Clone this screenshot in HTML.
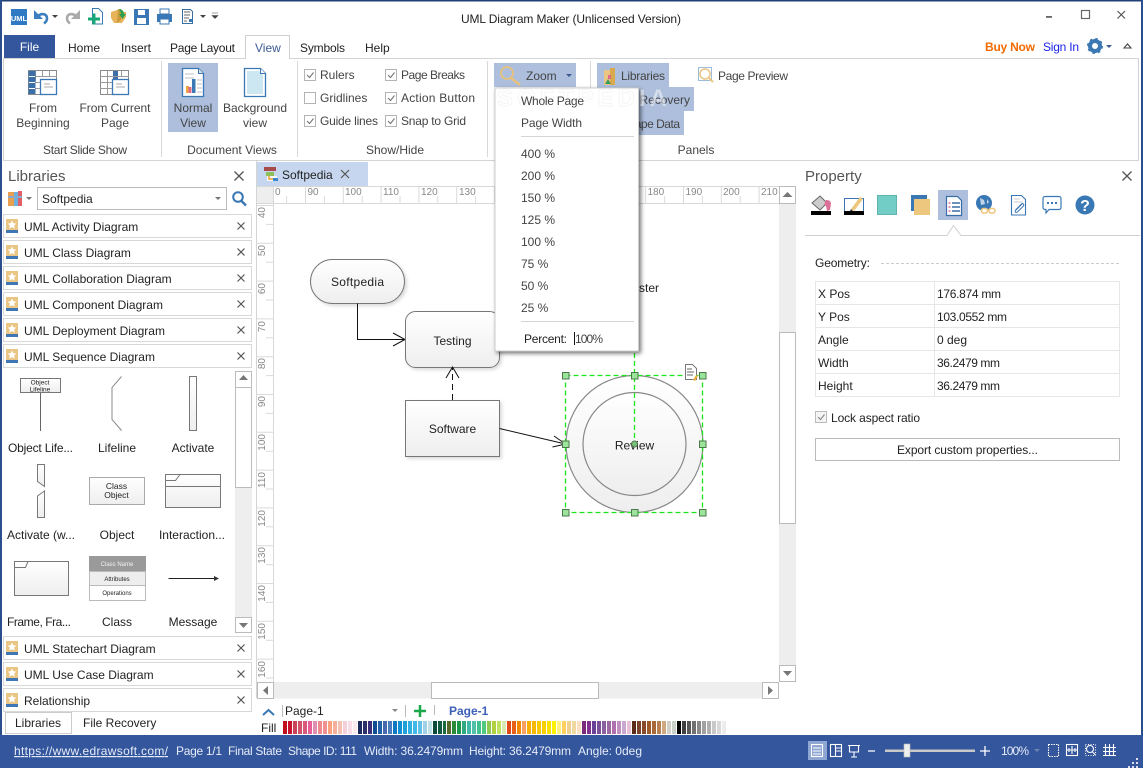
<!DOCTYPE html>
<html>
<head>
<meta charset="utf-8">
<title>UML Diagram Maker</title>
<style>
html,body{margin:0;padding:0;background:#fff;width:1143px;height:768px;overflow:hidden}
#s{position:absolute;left:0;top:0}
text{font-family:"Liberation Sans",sans-serif;font-size:12px;fill:#222}
.r text,text.r{fill:#444}
.c{text-anchor:middle}
.rl text{font-size:10px;fill:#888}
.st text{fill:#e6ecf8}
#pal{position:absolute;left:283px;top:721px;width:444px;height:13px;display:flex}
#pal i{flex:1;margin-right:1px;display:block}
</style>
</head>
<body>
<svg id="s" width="1143" height="768" viewBox="0 0 1143 768" xmlns="http://www.w3.org/2000/svg">
<defs>
<linearGradient id="g" x1="0" y1="0" x2="0" y2="1"><stop offset="0" stop-color="#fff"/><stop offset="1" stop-color="#eeeeee"/></linearGradient>
<g id="lib"><rect x="6" y="5" width="12" height="11" fill="#eac684"/><rect x="6" y="16" width="12" height="3" fill="#3f76b4"/><path d="M12 6.500l1.300 2.800 3 .3-2.200 2 .6 3-2.700-1.500-2.700 1.500.6-3-2.200-2 3-.3z" fill="#fff"/><path d="M237.500 8.500l7 7M244.500 8.500l-7 7" stroke="#555" stroke-width="1.200" fill="none"/></g>
<g id="h"><rect x="-3" y="-3" width="6.500" height="6.500" fill="#9ce49c" stroke="#4a7a4a" stroke-width="1"/></g>
<filter id="sh" x="-10%" y="-10%" width="125%" height="125%"><feDropShadow dx="2" dy="2" stdDeviation="1.500" flood-color="#000" flood-opacity=".14"/></filter>
<filter id="ms" x="-10%" y="-10%" width="120%" height="120%"><feDropShadow dx="2" dy="2" stdDeviation="2" flood-color="#000" flood-opacity=".55"/></filter>
<clipPath id="cv"><rect x="273" y="203" width="506" height="479"/></clipPath>
</defs>

<!-- window frame -->
<rect width="1143" height="768" fill="#fff"/>
<rect x="0" y="0" width="1143" height="1.500" fill="#1f3f75"/>
<rect x="0" y="0" width="2" height="768" fill="#2b4e8c"/>
<rect x="1141" y="0" width="2" height="768" fill="#2b4e8c"/>

<!-- QAT -->
<rect x="11" y="9" width="16" height="16" fill="#2f78c4"/>
<text x="19" y="21" class="c" style="font-size:7.500px;font-weight:bold;fill:#fff">UML</text>
<path d="M34 10v9h9z" fill="#3c7fc0"/>
<path d="M38 16c4-3.500 9-2 9 2.500 0 2-1 3.500-3 5" fill="none" stroke="#3c7fc0" stroke-width="2.600"/>
<path d="M52 15h6l-3 3z" fill="#444"/>
<path d="M80 10v9h-9z" fill="#aaa"/>
<path d="M76 16c-4-3.500-9-2-9 2.500 0 2 1 3.500 3 5" fill="none" stroke="#aaa" stroke-width="2.600"/>
<path d="M92.500 8.500h6l4 4v11.500h-10z" fill="#fff" stroke="#3a78b0"/>
<path d="M88 19h12M94 13.500v11" stroke="#19a878" stroke-width="3"/>
<path d="M111 12l9-3v3h6v5l-4 6h-8l-3-5z" fill="#e9b35a"/><path d="M118 9l4 1-1 10-4 3z" fill="#c89a3a"/><path d="M120 9c3 1 4 3 4 5h2l-3.500 5-3.500-5h2c0-2-1-3-2-4z" fill="#2aa050"/>
<rect x="134.500" y="9.500" width="14" height="15" fill="#3a78b5" stroke="#3a78b5"/><rect x="138" y="10" width="7" height="5" fill="#fff"/><rect x="137" y="18" width="9" height="6" fill="#fff"/>
<rect x="160" y="9" width="9" height="5" fill="#fff" stroke="#3a78b5"/><rect x="157" y="14" width="15" height="8" fill="#3a78b5"/><rect x="160" y="19" width="9" height="5" fill="#fff" stroke="#3a78b5"/>
<path d="M182.500 9.500h8l2 2v12h-10z" fill="#fff" stroke="#3a6f9f"/><path d="M184 12h6M184 15h6M184 18h5M184 21h3" stroke="#666"/><path d="M189 19h3v3h-3z" fill="#3a78b5"/>
<path d="M200 15h6l-3 3z" fill="#444"/><path d="M212 13h6M212 15.500h6l-3 3z" fill="#444" stroke="#444" stroke-width=".6"/>

<text x="571" y="23" class="c" style="fill:#222" textLength="220">UML Diagram Maker (Unlicensed Version)</text>
<rect x="1046" y="16" width="6" height="1.800" fill="#666"/>
<rect x="1081.500" y="10.500" width="8" height="8" fill="none" stroke="#666" stroke-width="1.200"/>
<path d="M1117.500 11l7.500 7.500M1125 11l-7.500 7.500" stroke="#555" stroke-width="1.200"/>

<!-- Ribbon -->
<rect x="3.500" y="58.500" width="1135" height="102" fill="#fff" stroke="#d4d4d4"/>
<rect x="4" y="35" width="51" height="23" fill="#34569c"/>
<text x="29.500" y="51" class="c" style="fill:#fff">File</text>
<path d="M245.500 58.500V35.500h44v23" fill="#fff" stroke="#cfcfcf"/><rect x="246" y="57" width="43" height="3" fill="#fff"/>
<text x="68" y="52">Home</text><text x="121" y="52">Insert</text><text x="170" y="52" textLength="65">Page Layout</text>
<text x="255" y="52" style="fill:#3c5a94">View</text><text x="300" y="52" textLength="45">Symbols</text><text x="365" y="52">Help</text>
<text x="985" y="51" style="fill:#f26a00;font-weight:bold" textLength="50">Buy Now</text>
<text x="1043" y="51" style="fill:#1a24e8" textLength="36">Sign In</text>
<circle cx="1095" cy="46" r="5" fill="none" stroke="#3c78b4" stroke-width="4"/><circle cx="1095" cy="46" r="7" fill="none" stroke="#3c78b4" stroke-width="2" stroke-dasharray="2.500 3"/>
<path d="M1106 45h6l-3 3z" fill="#3a5a90"/>
<path d="M1124 48l3.500-4 3.500 4z" fill="none" stroke="#444" stroke-width="1.100"/>
<path d="M161.500 61v96M297.500 61v96M487.500 61v96M590.500 61v96" stroke="#d8d8d8"/>

<!-- Slide show icons -->
<g id="ss"><rect x="28.500" y="70.500" width="28" height="24" fill="#fff" stroke="#8a8a8a"/><path d="M28 76.500h29M28 82.500h12M28 88.500h12M35.500 70v11M42.500 70v6M49.500 70v6" stroke="#999"/><rect x="28.500" y="71" width="7" height="23" fill="#3c6ea8"/><path d="M29 76.500h6M29 82.500h6M29 88.500h6" stroke="#fff"/><rect x="40.500" y="79.500" width="16" height="15" fill="#fff" stroke="#3c78b4" stroke-width="1.300"/><path d="M44 84h6M44 87h9" stroke="#aaa"/></g>
<g><rect x="100.500" y="70.500" width="28" height="24" fill="#fff" stroke="#8a8a8a"/><path d="M100 76.500h29M100 82.500h12M100 88.500h12M107.500 70v24M114.500 70v10M121.500 70v6" stroke="#999"/><rect x="113" y="71" width="5" height="5" fill="#3c6ea8"/><rect x="113" y="77" width="5" height="3" fill="#3c6ea8"/><rect x="112.500" y="79.500" width="16" height="15" fill="#fff" stroke="#3c78b4" stroke-width="1.300"/><path d="M116 84h6M116 87h9" stroke="#aaa"/></g>
<text x="43" y="112" class="c r">From</text><text x="43" y="127" class="c r">Beginning</text>
<text x="115" y="112" class="c r" textLength="71">From Current</text><text x="115" y="127" class="c r">Page</text>
<text x="85" y="154" class="c r" textLength="84">Start Slide Show</text>

<!-- Doc views -->
<rect x="168" y="63" width="50" height="69" fill="#adbfdd"/>
<path d="M182.500 68.500h16l5 5v23h-21z" fill="#fff" stroke="#3a78b5" stroke-width="1.300"/>
<path d="M198.500 68.500v5h5" fill="#ddd" stroke="#3a78b5"/>
<path d="M185 74h9M185 78h9M197 80h5M197 84h5M197 88h5M197 92h5" stroke="#ccc" stroke-width="1.300"/>
<rect x="186" y="86" width="3" height="7" fill="#f0a83c"/><rect x="188.500" y="87" width="3" height="6" fill="#e06a8a"/><rect x="192" y="79" width="3.500" height="14" fill="#3a78b5"/>
<text x="193" y="112" class="c r">Normal</text><text x="193" y="127" class="c r">View</text>
<path d="M244.500 68.500h16l5 5v23h-21z" fill="#fff" stroke="#3a78b5" stroke-width="1.300"/>
<path d="M247 71h12l4 4v19h-16z" fill="#cce6f2"/>
<path d="M260.500 68.500v5h5" fill="#fff" stroke="#3a78b5"/>
<text x="255" y="112" class="c r">Background</text><text x="255" y="127" class="c r">view</text>
<text x="232" y="154" class="c r">Document Views</text>

<!-- Show/Hide -->
<g fill="#fff" stroke="#b4b4b4"><rect x="304.500" y="69.500" width="11" height="11"/><rect x="304.500" y="92.500" width="11" height="11"/><rect x="304.500" y="115.500" width="11" height="11"/><rect x="385.500" y="69.500" width="11" height="11"/><rect x="385.500" y="92.500" width="11" height="11"/><rect x="385.500" y="115.500" width="11" height="11"/></g>
<g fill="none" stroke="#777" stroke-width="1.100"><path d="M307 75l2.500 2.500 4-5M307 121l2.500 2.500 4-5M388 75l2.500 2.500 4-5M388 98l2.500 2.500 4-5M388 121l2.500 2.500 4-5"/></g>
<text x="320" y="79" class="r">Rulers</text><text x="320" y="102" class="r">Gridlines</text><text x="320" y="125" class="r" textLength="58">Guide lines</text>
<text x="401" y="79" class="r" textLength="64">Page Breaks</text><text x="401" y="102" class="r" textLength="74">Action Button</text><text x="401" y="125" class="r" textLength="65">Snap to Grid</text>
<text x="395" y="154" class="c r">Show/Hide</text>

<!-- Zoom + panels -->
<rect x="494" y="63" width="82" height="24" fill="#adbfdd"/>
<circle cx="507" cy="73" r="6" fill="none" stroke="#e8c27c" stroke-width="1.800"/><path d="M511 78l9 7" stroke="#e8c27c" stroke-width="2.500"/>
<text x="526" y="80" class="r">Zoom</text><path d="M566 74h6l-3 3z" fill="#3a5a90"/>
<path d="M597 63h72v24h25v24h-10v24h-87z" fill="#adbfdd"/>
<rect x="604" y="70" width="11" height="15" fill="#eac684"/><rect x="610" y="68" width="5" height="17" fill="#d9a94e"/><path d="M605 84l3-5 3 5z" fill="#3a9a5a"/><rect x="608" y="75" width="3" height="4" fill="#e06a8a"/>
<text x="621" y="80" class="r" textLength="44">Libraries</text>
<text x="617" y="104" class="r" textLength="73">File Recovery</text>
<text x="621" y="128" class="r" textLength="59">Shape Data</text>
<rect x="698.500" y="67.500" width="13" height="13" fill="none" stroke="#3c78b4" stroke-dasharray="1 1"/>
<circle cx="705" cy="74" r="5" fill="none" stroke="#eac684" stroke-width="1.500"/><path d="M709 78l4 4" stroke="#eac684" stroke-width="2"/>
<text x="718" y="80" class="r" textLength="70">Page Preview</text>
<text x="696" y="154" class="c r">Panels</text>

<!-- Libraries panel -->
<text x="8" y="181" style="font-size:15px;fill:#555">Libraries</text>
<path d="M234.500 171.500l9 9M243.500 171.500l-9 9" stroke="#555" stroke-width="1.300"/>
<rect x="8" y="192" width="6" height="14" fill="#e8a050"/><rect x="14" y="192" width="4" height="14" fill="#6ab0e0"/><rect x="18" y="191" width="4" height="15" fill="#e0606a"/><path d="M8 197h14" stroke="#8ac" stroke-width="2"/>
<path d="M26 197h6l-3 3z" fill="#777"/>
<rect x="37.500" y="187.500" width="189" height="22" fill="#fff" stroke="#bbb"/>
<text x="42" y="203">Softpedia</text><path d="M215 197h6l-3 3z" fill="#777"/>
<circle cx="238" cy="197" r="4.800" fill="none" stroke="#3a78b5" stroke-width="2"/><path d="M241.500 201l4.500 4.500" stroke="#3a78b5" stroke-width="2.500"/>

<g fill="#fff" stroke="#d8d8d8">
<rect x="3.500" y="214.500" width="248" height="23"/><rect x="3.500" y="240.500" width="248" height="23"/><rect x="3.500" y="266.500" width="248" height="23"/><rect x="3.500" y="292.500" width="248" height="23"/><rect x="3.500" y="318.500" width="248" height="23"/><rect x="3.500" y="344.500" width="248" height="23"/><rect x="3.500" y="636.500" width="248" height="23"/><rect x="3.500" y="662.500" width="248" height="23"/><rect x="3.500" y="688.500" width="248" height="23"/>
</g>
<use href="#lib" y="214"/><use href="#lib" y="240"/><use href="#lib" y="266"/><use href="#lib" y="292"/><use href="#lib" y="318"/><use href="#lib" y="344"/><use href="#lib" y="636"/><use href="#lib" y="662"/><use href="#lib" y="688"/>
<text x="24" y="231">UML Activity Diagram</text><text x="24" y="257">UML Class Diagram</text><text x="24" y="283">UML Collaboration Diagram</text><text x="24" y="309">UML Component Diagram</text><text x="24" y="335">UML Deployment Diagram</text><text x="24" y="361">UML Sequence Diagram</text><text x="24" y="653">UML Statechart Diagram</text><text x="24" y="679">UML Use Case Diagram</text><text x="24" y="705">Relationship</text>

<!-- Lib scrollbar -->
<rect x="235" y="371" width="17" height="262" fill="#eee"/>
<rect x="235.500" y="371.500" width="16" height="116" fill="#fff" stroke="#bbb"/><path d="M235 387.500h17" stroke="#bbb"/>
<rect x="235.500" y="617.500" width="16" height="15" fill="#fff" stroke="#bbb"/>
<path d="M239 380h9l-4.500-5z" fill="#777"/><path d="M239 623h9l-4.500 5z" fill="#777"/>

<!-- Shapes -->
<rect x="20.500" y="378.500" width="40" height="14" fill="url(#g)" stroke="#777"/>
<text x="40" y="384.500" class="c" style="font-size:6.500px">Object</text><text x="40" y="391.500" class="c" style="font-size:6.500px">Lifeline</text>
<path d="M40.500 393v38" stroke="#666"/>
<path d="M121.500 376.500l-9.500 11v32l9.500 11" fill="none" stroke="#888"/>
<rect x="189.500" y="376.500" width="7" height="54" fill="url(#g)" stroke="#777"/>
<path d="M37.500 464.500h7v22l-7-5z" fill="url(#g)" stroke="#777"/><path d="M44.500 491l-7 5v21.500h7z" fill="url(#g)" stroke="#777"/>
<rect x="89.500" y="477.500" width="55" height="27" fill="url(#g)" stroke="#aaa"/>
<text x="116.500" y="489" class="c" style="font-size:8.500px">Class</text><text x="116.500" y="498" class="c" style="font-size:8.500px">Object</text>
<rect x="165.500" y="474.500" width="55" height="33" fill="url(#g)" stroke="#777"/><path d="M165.500 486.500h55M165.500 480.500h10l4.500-6" fill="none" stroke="#777"/>
<rect x="14.500" y="561.500" width="54" height="34" fill="url(#g)" stroke="#777"/><path d="M14.500 567.500h11l2.500-6" fill="none" stroke="#777"/>
<rect x="89" y="556" width="57" height="15" fill="#9a9a9a"/><rect x="89.500" y="571.500" width="56" height="14" fill="#eee" stroke="#bbb"/><rect x="89.500" y="585.500" width="56" height="15" fill="#fff" stroke="#bbb"/>
<text x="117" y="566" class="c" style="font-size:6px;fill:#f2f2f2">Class Name</text><text x="117" y="581" class="c" style="font-size:6px">Attributes</text><text x="117" y="595" class="c" style="font-size:6px">Operations</text>
<path d="M168.500 578.500h47" stroke="#222"/><path d="M214 576l5 2.500-5 2.500z" fill="#333"/>
<g class="c"><text x="40.500" y="452" textLength="65">Object Life...</text><text x="117" y="452">Lifeline</text><text x="193" y="452">Activate</text><text x="41" y="539">Activate (w...</text><text x="117" y="539">Object</text><text x="192" y="539">Interaction...</text><text x="39" y="626" textLength="64">Frame, Fra...</text><text x="117" y="626">Class</text><text x="193" y="626">Message</text></g>

<!-- Bottom-left tabs -->
<path d="M5.500 712.500h66v21h-66z" fill="#fff" stroke="#ccc"/>
<text x="38" y="727" class="c">Libraries</text><text x="83" y="727">File Recovery</text>

<!-- Canvas -->
<rect x="257" y="162" width="111" height="24" fill="#c6d6ef"/>
<rect x="264" y="167" width="12" height="4" fill="#a84a4a"/><rect x="266" y="172" width="8" height="4" fill="#8fbf5a"/><rect x="267" y="176" width="10" height="5" fill="#f8f8f8"/><path d="M269 176v3h4" stroke="#e8a030" stroke-width="1.500" fill="none"/><rect x="273" y="178" width="5" height="3" fill="#3a88d0"/>
<text x="282" y="179">Softpedia</text>
<path d="M341 170l8 8M349 170l-8 8" stroke="#555" stroke-width="1.200"/>
<path d="M256.500 161v537" stroke="#d4d4d4"/>
<path d="M257 186.500h522M257 203.500h522M273.500 186v496" stroke="#d8d8d8"/>
<rect x="257" y="187" width="16" height="16" fill="#eee"/>
<g stroke="#dadada">
<path d="M305.500 186v17M343.300 186v17M381.100 186v17M418.900 186v17M456.700 186v17M494.500 186v17M532.300 186v17M570.100 186v17M607.900 186v17M645.700 186v17M683.500 186v17M721.300 186v17M759.100 186v17"/>
<path d="M286.600 196v7M324.400 196v7M362.200 196v7M400 196v7M437.800 196v7M475.600 196v7M513.400 196v7M551.200 196v7M589 196v7M626.800 196v7M664.600 196v7M702.400 196v7M740.200 196v7"/>
<path d="M257 205.500h16M257 243.300h16M257 281.100h16M257 318.900h16M257 356.700h16M257 394.500h16M257 432.300h16M257 470.100h16M257 507.900h16M257 545.700h16M257 583.500h16M257 621.300h16M257 659.100h16"/>
<path d="M266 224.400h7M266 262.200h7M266 300h7M266 337.800h7M266 375.600h7M266 413.400h7M266 451.200h7M266 489h7M266 526.800h7M266 564.600h7M266 602.400h7M266 640.200h7M266 678h7"/>
</g>
<g class="rl">
<text x="275" y="195">0</text><text x="307.500" y="195">90</text><text x="345" y="195">100</text><text x="383" y="195">110</text><text x="421" y="195">120</text><text x="459" y="195">130</text><text x="647.500" y="195">180</text><text x="685.500" y="195">190</text><text x="723" y="195">200</text><text x="761" y="195">210</text>
<g style="text-anchor:end">
<text transform="translate(265,207) rotate(-90)">40</text><text transform="translate(265,245) rotate(-90)">50</text><text transform="translate(265,283) rotate(-90)">60</text><text transform="translate(265,321) rotate(-90)">70</text><text transform="translate(265,358) rotate(-90)">80</text><text transform="translate(265,396) rotate(-90)">90</text><text transform="translate(265,434) rotate(-90)">100</text><text transform="translate(265,472) rotate(-90)">110</text><text transform="translate(265,510) rotate(-90)">120</text><text transform="translate(265,547) rotate(-90)">130</text><text transform="translate(265,585) rotate(-90)">140</text><text transform="translate(265,623) rotate(-90)">150</text><text transform="translate(265,661) rotate(-90)">160</text>
</g></g>

<!-- V scrollbar -->
<rect x="779" y="203" width="17" height="463" fill="#eee"/>
<rect x="779.500" y="186.500" width="16" height="17" fill="#fff" stroke="#bbb"/><path d="M782.500 197h10l-5-5z" fill="#777"/>
<rect x="779.500" y="332.500" width="16" height="191" fill="#fff" stroke="#bbb"/>
<rect x="779.500" y="665.500" width="16" height="16" fill="#fff" stroke="#bbb"/><path d="M783 671h9l-4.500 5z" fill="#777"/>
<!-- H scrollbar -->
<rect x="257" y="682" width="522" height="16.500" fill="#eee"/>
<rect x="257.500" y="682.500" width="16" height="16" fill="#fff" stroke="#bbb"/><path d="M268 686v9l-5-4.500z" fill="#777"/>
<rect x="431.500" y="682.500" width="167" height="16" fill="#fff" stroke="#bbb"/>
<rect x="762.500" y="682.500" width="16" height="16" fill="#fff" stroke="#bbb"/><path d="M768 686v9l5-4.500z" fill="#777"/>

<!-- Diagram -->
<g clip-path="url(#cv)">
<text x="639" y="292">ster</text>
<rect x="310.500" y="259.500" width="94" height="44" rx="22" fill="url(#g)" stroke="#777" filter="url(#sh)"/>
<text x="357.500" y="286" class="c" textLength="53">Softpedia</text>
<path d="M357.500 303.500v36h47" fill="none" stroke="#111"/><path d="M393 333l12 6.500-12 6.500" fill="none" stroke="#111"/>
<rect x="405.500" y="311.500" width="94" height="56" rx="10" fill="url(#g)" stroke="#777" filter="url(#sh)"/>
<text x="452.500" y="345" class="c">Testing</text>
<path d="M452.500 400v-32" fill="none" stroke="#111" stroke-dasharray="6 4"/><path d="M446 378l6.500-11 6.500 11" fill="none" stroke="#111"/>
<rect x="405.500" y="400.500" width="94" height="56" fill="url(#g)" stroke="#777" filter="url(#sh)"/>
<text x="452.500" y="433" class="c">Software</text>
<path d="M499.500 428.500l66 15.500" fill="none" stroke="#111"/><path d="M554 436l11.500 8-13 3" fill="none" stroke="#111"/>
<circle cx="634.500" cy="444" r="68.500" fill="url(#g)" stroke="#888" stroke-width="1.200"/>
<circle cx="634.500" cy="444" r="51.500" fill="url(#g)" stroke="#888" stroke-width="1.200"/>
<text x="634.500" y="449.500" class="c">Review</text>
<rect x="565.500" y="375.500" width="137" height="137" fill="none" stroke="#1be51b" stroke-width="1.300" stroke-dasharray="5 3"/>
<path d="M634.500 345v99" stroke="#1be51b" stroke-width="1.300" stroke-dasharray="5 3"/>
<circle cx="634.500" cy="444" r="3" fill="#7ac07a" stroke="#4a7a4a"/>
<use href="#h" x="565.500" y="375.500"/><use href="#h" x="634.500" y="375.500"/><use href="#h" x="702.500" y="375.500"/><use href="#h" x="565.500" y="444"/><use href="#h" x="702.500" y="444"/><use href="#h" x="565.500" y="512.500"/><use href="#h" x="634.500" y="512.500"/><use href="#h" x="702.500" y="512.500"/>
<path d="M685.500 364.500h7l4 4v11h-11z" fill="#fff" stroke="#777"/><path d="M687 369h5M687 372h7M687 375h6" stroke="#666"/><path d="M693 380l3-5 2 1-3 5z" fill="#e8b040"/>
</g>

<!-- Zoom dropdown -->
<rect x="495" y="88" width="143.500" height="263" fill="#fff" stroke="#ccc" filter="url(#ms)"/>
<text x="497" y="106" textLength="170" style="font-size:24px;font-weight:bold;fill:#fff;fill-opacity:.5;stroke:#999;stroke-opacity:.1">SOFTPEDIA</text>
<g class="r">
<text x="521" y="105" textLength="63">Whole Page</text><text x="521" y="127" textLength="61">Page Width</text>
<path d="M521 136.500h113M521 321.500h113" stroke="#d4d4d4"/>
<text x="521" y="158">400 %</text><text x="521" y="180">200 %</text><text x="521" y="202">150 %</text><text x="521" y="224">125 %</text><text x="521" y="246">100 %</text><text x="521" y="268">75 %</text><text x="521" y="290">50 %</text><text x="521" y="312">25 %</text>
</g>
<text x="524" y="343" textLength="43">Percent:</text><path d="M574.500 332v13" stroke="#111"/><text x="575" y="343" class="r" textLength="28">100%</text>

<!-- Property -->
<text x="805" y="181" style="font-size:15px;fill:#555">Property</text>
<path d="M1122.500 171.500l9 9M1131.500 171.500l-9 9" stroke="#555" stroke-width="1.300"/>
<path d="M820 196l7 7-7 7-8-7z" fill="#ccc" stroke="#666"/><path d="M826 200c3 0 5 1 5 4l-1 6-3 1-1-5-2-1z" fill="#dc7098"/><rect x="811" y="211" width="20" height="4" fill="#000"/>
<rect x="844.500" y="198.500" width="19" height="13" fill="#fff" stroke="#3a78b5"/><path d="M851 209l9-12 3 2-9 12z" fill="#eec77f"/><path d="M851 209l-1 2 3 0z" fill="#333"/><rect x="844" y="211" width="20" height="4" fill="#000"/>
<rect x="877.500" y="195.500" width="19" height="19" fill="#72cdc6" stroke="#5fb5ae"/>
<rect x="911" y="195" width="16" height="16" fill="#3a78b5"/><rect x="914" y="199" width="16" height="16" fill="#eec77f"/>
<rect x="938" y="190" width="30" height="30" fill="#adbfdd"/>
<path d="M946.500 196.500h11l4 4v15h-15z" fill="#fff" stroke="#3a6ea5" stroke-width="1.200"/>
<path d="M952 203h8M952 207h8M952 211h8" stroke="#3a6ea5" stroke-width="1.500"/><path d="M948.500 203h2M948.500 207h2M948.500 211h2" stroke="#e07090" stroke-width="1.500"/>
<circle cx="984" cy="203" r="8" fill="#3a78b5"/><path d="M980 198l4 2 1 4-4 1zM987 199l2 3-2 2z" fill="#fff" fill-opacity=".7"/>
<rect x="981.500" y="208.500" width="6" height="4.500" rx="2" fill="#fff" stroke="#eec77f" stroke-width="1.500"/><rect x="989" y="208.500" width="6" height="4.500" rx="2" fill="#fff" stroke="#eec77f" stroke-width="1.500"/>
<path d="M1011.500 195.500h10l4 4v15.500h-14z" fill="#fff" stroke="#3a78b5" stroke-width="1.100"/><path d="M1014 199h6M1014 202h9" stroke="#ccc"/><path d="M1022 204l-6 6c-2 2 0 3 1.500 2l6-6c1-2-1-3-2-2l-6 6" fill="none" stroke="#3a78b5"/>
<path d="M1045 196.500h14a2 2 0 0 1 2 2v9a2 2 0 0 1-2 2h-10l-3 3.500v-3.500h-1a2 2 0 0 1-2-2v-9a2 2 0 0 1 2-2z" fill="#fff" stroke="#3a78b5" stroke-width="1.200"/>
<path d="M1047 203h2M1051 203h2M1055 203h2" stroke="#3a78b5" stroke-width="2"/>
<circle cx="1085" cy="205" r="9.500" fill="#3a78b5"/><text x="1085" y="211" class="c" style="font-size:16px;font-weight:bold;fill:#fff">?</text>
<path d="M805 235.500h142l6.500-10 7.500 10h179" fill="none" stroke="#d0d0d0"/>

<text x="815" y="267" textLength="55">Geometry:</text>
<path d="M881 263.500h238" stroke="#ccc" stroke-dasharray="3 2"/>
<rect x="815.500" y="281.500" width="304" height="115" fill="#fff" stroke="#e6e6e6"/>
<path d="M815 304.500h305M815 327.500h305M815 350.500h305M815 373.500h305M934.500 281v115" stroke="#e6e6e6"/>
<text x="818" y="298">X Pos</text><text x="937" y="298" textLength="64">176.874 mm</text>
<text x="818" y="321">Y Pos</text><text x="937" y="321" textLength="70">103.0552 mm</text>
<text x="818" y="344">Angle</text><text x="937" y="344">0 deg</text>
<text x="818" y="367">Width</text><text x="937" y="367" textLength="63">36.2479 mm</text>
<text x="818" y="390">Height</text><text x="937" y="390" textLength="63">36.2479 mm</text>
<rect x="815.500" y="411.500" width="11" height="11" fill="#f4f4f4" stroke="#bbb"/><path d="M818 417l2.500 2.500 4-5" fill="none" stroke="#888" stroke-width="1.100"/>
<text x="831" y="422" textLength="89">Lock aspect ratio</text>
<rect x="815.500" y="438.500" width="304" height="22" fill="#fff" stroke="#bbb"/>
<text x="967.500" y="454" class="c" textLength="141">Export custom properties...</text>

<!-- Page tabs -->
<path d="M263 715l5.500-5 5.500 5" fill="none" stroke="#3a78b5" stroke-width="2"/>
<path d="M282.500 705v12M405.500 705v12M434.500 705v10" stroke="#bbb"/>
<text x="285" y="715">Page-1</text><path d="M392 709h6l-3 3z" fill="#888"/>
<path d="M420 705v12M414 711h12" stroke="#1aa84a" stroke-width="2.500"/>
<text x="449" y="715" style="font-weight:bold;fill:#3c5fb8">Page-1</text>
<text x="261" y="732">Fill</text>

<!-- Status bar -->
<rect x="0" y="735" width="1143" height="33" fill="#34569c"/>
<g class="st">
<text x="14" y="755" text-decoration="underline" textLength="154">https://www.edrawsoft.com/</text>
<text x="176" y="755" textLength="46">Page 1/1</text><text x="228" y="755" textLength="54">Final State</text><text x="288" y="755" textLength="69">Shape ID: 111</text><text x="364" y="755" textLength="99">Width: 36.2479mm</text><text x="469" y="755" textLength="102">Height: 36.2479mm</text><text x="578" y="755" textLength="64">Angle: 0deg</text>
<text x="1001" y="755" textLength="28">100%</text>
</g>
<rect x="808" y="741" width="19" height="19" fill="#8ea6d2"/>
<g fill="none" stroke="#fff" stroke-width="1.100">
<rect x="811.500" y="744.500" width="11" height="12"/><path d="M813 748h8M813 751h8M813 754h8"/>
<rect x="830.500" y="744.500" width="11" height="12"/><path d="M835.500 744v13M836 748h5M836 751h5"/>
<path d="M848 745.500h12M849.500 746v6h9v-6M854 752v5M851 757h6"/>
<path d="M868 751h7M980 751h10M985 746v10" stroke-width="1.300"/>
<rect x="1048.500" y="744.500" width="10" height="12" stroke-dasharray="1.500 1"/>
<rect x="1066.500" y="744.500" width="11" height="11"/><path d="M1069 748v4M1075 748v4M1072 746v8M1067 750h10"/>
<circle cx="1090" cy="749" r="3.500"/><path d="M1092.500 752l3 3"/><rect x="1085.500" y="744.500" width="10" height="11" stroke-dasharray="1 1.500"/>
<path d="M1105.500 744v12M1109.500 744v12M1113.500 744v12M1103 747.500h13M1103 751.500h13M1103 755.500h13"/>
</g>
<rect x="885" y="749.500" width="90" height="2.500" fill="#c8c8c8"/>
<rect x="904" y="744" width="6" height="13" fill="#eee" stroke="#bbb" stroke-width=".6"/>
<path d="M1034 749h6l-3 3z" fill="#6d84b4"/>
<path d="M1136 758h2v2h-2zM1132 762h2v2h-2zM1136 762h2v2h-2zM1128 766h2v2h-2zM1132 766h2v2h-2zM1136 766h2v2h-2z" fill="#dde"/>
</svg>

<div id="pal"><i style="background:#c00d1e"></i><i style="background:#c8102e"></i><i style="background:#c94258"></i><i style="background:#d2506a"></i><i style="background:#d8597a"></i><i style="background:#e85e96"></i><i style="background:#df90b0"></i><i style="background:#ee8a8e"></i><i style="background:#f09090"></i><i style="background:#fda07e"></i><i style="background:#f6b09a"></i><i style="background:#f5c1b5"></i><i style="background:#f5d0d8"></i><i style="background:#f8dce8"></i><i style="background:#fbe9f0"></i><i style="background:#1b2a5e"></i><i style="background:#2b3068"></i><i style="background:#3a2e7a"></i><i style="background:#0f4c92"></i><i style="background:#2060a8"></i><i style="background:#4868b0"></i><i style="background:#4a7cc0"></i><i style="background:#1078c0"></i><i style="background:#1090d0"></i><i style="background:#20a0d8"></i><i style="background:#30b0e0"></i><i style="background:#40b8e8"></i><i style="background:#60c0e8"></i><i style="background:#a0d0e8"></i><i style="background:#c0e0e8"></i><i style="background:#0a4a3a"></i><i style="background:#105a40"></i><i style="background:#1a6a40"></i><i style="background:#586a2a"></i><i style="background:#2a8a3a"></i><i style="background:#1a9848"></i><i style="background:#30a880"></i><i style="background:#40b8a8"></i><i style="background:#50c0a8"></i><i style="background:#40c090"></i><i style="background:#50c880"></i><i style="background:#90c850"></i><i style="background:#b0d040"></i><i style="background:#c0e060"></i><i style="background:#d8e8b0"></i><i style="background:#e04818"></i><i style="background:#e86018"></i><i style="background:#f08800"></i><i style="background:#f8a060"></i><i style="background:#f8b000"></i><i style="background:#f8b800"></i><i style="background:#f8c800"></i><i style="background:#f8d000"></i><i style="background:#f8e000"></i><i style="background:#fff000"></i><i style="background:#fff080"></i><i style="background:#ffd060"></i><i style="background:#f0d090"></i><i style="background:#f0d8a0"></i><i style="background:#f8e0c0"></i><i style="background:#7a2a78"></i><i style="background:#803090"></i><i style="background:#6a4098"></i><i style="background:#7a5098"></i><i style="background:#8a60a0"></i><i style="background:#9a6aa0"></i><i style="background:#b070b0"></i><i style="background:#c090c0"></i><i style="background:#c8a8d0"></i><i style="background:#e8c0d8"></i><i style="background:#5a2a18"></i><i style="background:#7a4028"></i><i style="background:#8a4a28"></i><i style="background:#a05a28"></i><i style="background:#a86838"></i><i style="background:#b88050"></i><i style="background:#d0a880"></i><i style="background:#d0d0c8"></i><i style="background:#c8d0c8"></i><i style="background:#000"></i><i style="background:#404040"></i><i style="background:#585858"></i><i style="background:#707070"></i><i style="background:#888"></i><i style="background:#a0a0a0"></i><i style="background:#b0b0b0"></i><i style="background:#c8c8c8"></i><i style="background:#d8d8d8"></i><i style="background:#ececec"></i></div>
</body>
</html>
